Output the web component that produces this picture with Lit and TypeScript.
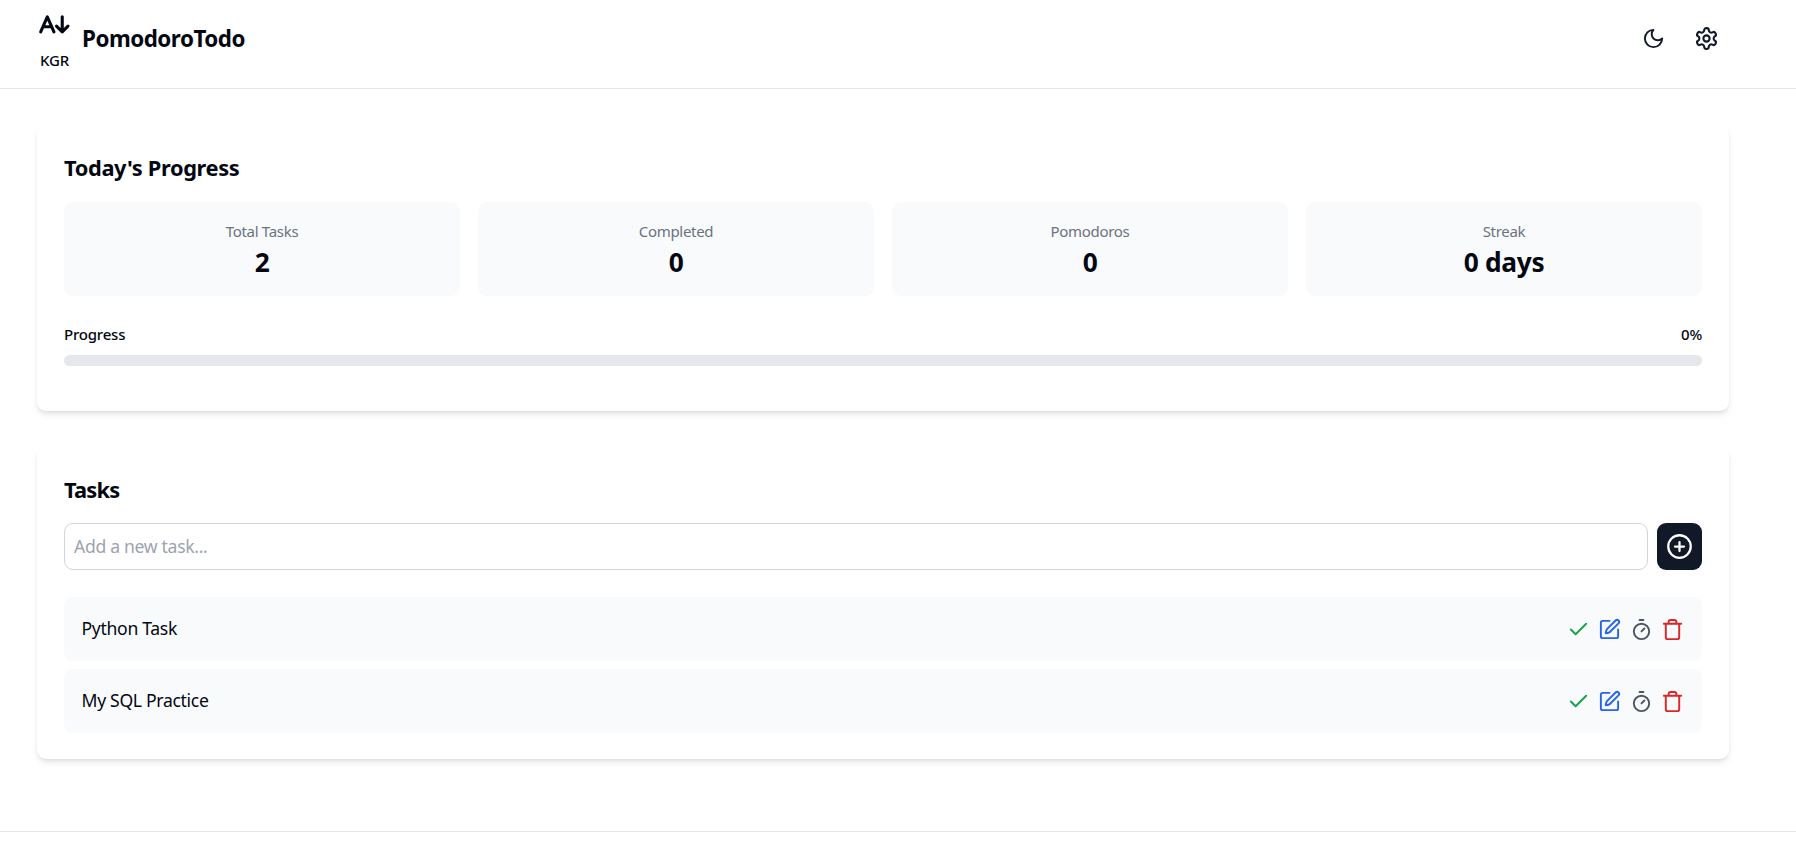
import { LitElement, html, css, svg } from "lit";
import { customElement } from "lit/decorators.js";

const icon = (cls: string, body: unknown, w = 2) => html`<svg class=${cls} viewBox="0 0 24 24" fill="none" stroke="currentColor" stroke-width=${w} stroke-linecap="round" stroke-linejoin="round">${body}</svg>`;

const moon = svg`<path d="M12 3a6 6 0 0 0 9 9 9 9 0 1 1-9-9Z"/>`;
const gear = svg`<path d="M12.22 2h-.44a2 2 0 0 0-2 2v.18a2 2 0 0 1-1 1.73l-.43.25a2 2 0 0 1-2 0l-.15-.08a2 2 0 0 0-2.73.73l-.22.38a2 2 0 0 0 .73 2.73l.15.1a2 2 0 0 1 1 1.72v.51a2 2 0 0 1-1 1.74l-.15.09a2 2 0 0 0-.73 2.73l.22.38a2 2 0 0 0 2.73.73l.15-.08a2 2 0 0 1 2 0l.43.25a2 2 0 0 1 1 1.73V20a2 2 0 0 0 2 2h.44a2 2 0 0 0 2-2v-.18a2 2 0 0 1 1-1.73l.43-.25a2 2 0 0 1 2 0l.15.08a2 2 0 0 0 2.73-.73l.22-.39a2 2 0 0 0-.73-2.73l-.15-.08a2 2 0 0 1-1-1.74v-.5a2 2 0 0 1 1-1.74l.15-.09a2 2 0 0 0 .73-2.73l-.22-.38a2 2 0 0 0-2.73-.73l-.15.08a2 2 0 0 1-2 0l-.43-.25a2 2 0 0 1-1-1.73V4a2 2 0 0 0-2-2z"/><circle cx="12" cy="12" r="3"/>`;
const plus = svg`<circle cx="12" cy="12" r="10"/><path d="M8 12h8M12 8v8"/>`;
const check = svg`<path d="M20 6 9 17l-5-5"/>`;
const edit = svg`<path d="M12 3H5a2 2 0 0 0-2 2v14a2 2 0 0 0 2 2h14a2 2 0 0 0 2-2v-7"/><path d="M18.375 2.625a1 1 0 0 1 3 3l-9.013 9.014a2 2 0 0 1-.853.505l-2.873.84a.5.5 0 0 1-.62-.62l.84-2.873a2 2 0 0 1 .506-.852z"/>`;
const timer = svg`<path d="M10 2h4M12 14l3-3"/><circle cx="12" cy="14" r="8"/>`;
const trash = svg`<path d="M3 6h18M19 6v14a2 2 0 0 1-2 2H7a2 2 0 0 1-2-2V6M8 6V4a2 2 0 0 1 2-2h4a2 2 0 0 1 2 2v2"/>`;
const logoMark = svg`<path d="M1.5 17 7.5 3.5 13.5 17M3.6 12.5h7.8" /><path d="M21 3.5V17M15.8 11.8 21 17l5.2-5.2"/>`;

@customElement("app-root")
export class AppRoot extends LitElement {
  static styles = css`
    :host { display: block; min-height: 846px; background: #fff; color: #030712; font-family: "Noto Sans", "Open Sans", sans-serif; overflow: hidden; }
    * { box-sizing: border-box; }
    header { height: 89px; border-bottom: 1px solid #e5e7eb; display: flex; align-items: center; justify-content: space-between; padding: 0 77px 12px 37px; }
    .brand { display: flex; align-items: center; gap: 10px; }
    .logo { width: 35px; margin-top: 5px; display: flex; flex-direction: column; align-items: center; gap: 17px; }
    .logo svg { width: 35px; height: 21px; display: block; }
    .logo span { font-size: 15px; line-height: 18px; font-weight: 500; letter-spacing: -0.2px; }
    h1 { margin: 0; padding-top: 2px; font-size: 22.4px; line-height: 32px; font-weight: 700; letter-spacing: -0.5px; }
    .top-actions { display: flex; align-items: center; gap: 29px; }
    .top-actions svg { display: block; color: #111827; }
    .moon { width: 23px; height: 23px; }
    .gear { width: 25px; height: 25px; }
    main { padding: 36px 67px 0 37px; display: flex; flex-direction: column; gap: 36px; }
    .card { background: #fff; border-radius: 9px; padding: 27px 27px 26px; box-shadow: 0 4px 7px -1px rgba(0,0,0,.1), 0 2px 4px -2px rgba(0,0,0,.1); }
    .card.first { padding-bottom: 27px; }
    h2 { margin: 0; font-size: 21.8px; line-height: 32px; font-weight: 700; letter-spacing: -0.35px; }
    h2.short { letter-spacing: -0.8px; }
    .stats { margin-top: 18px; display: grid; grid-template-columns: repeat(4, 1fr); gap: 18px; }
    .stat { height: 94px; padding-top: 19px; background: #f9fafb; border-radius: 9px; display: flex; flex-direction: column; align-items: center; }
    .stat .label { font-size: 15px; line-height: 20px; color: #6b7280; letter-spacing: -0.3px; }
    .stat .value { margin-top: 3px; font-size: 26.3px; line-height: 36px; font-weight: 700; letter-spacing: -0.3px; }
    .prog-head { margin-top: 28px; display: flex; justify-content: space-between; font-size: 15px; line-height: 20px; font-weight: 500; letter-spacing: -0.2px; }
    .bar { margin-top: 11px; height: 11px; border-radius: 6px; background: #e5e7eb; margin-bottom: 18px; }
    .add { margin-top: 17px; display: flex; gap: 9px; }
    input { flex: 1; min-width: 0; height: 47px; border: 1px solid #d1d5db; border-radius: 9px; padding: 0 8px 1px 9px; font: inherit; font-size: 17.6px; letter-spacing: -0.32px; background: #fff; outline: none; }
    input::placeholder { color: #9ca3af; opacity: 1; }
    .add button { width: 45px; height: 47px; border: 0; border-radius: 9px; background: #111827; color: #fff; display: flex; align-items: center; justify-content: center; padding: 0; }
    .add button svg { width: 27px; height: 27px; }
    .tasks { margin-top: 27px; display: flex; flex-direction: column; gap: 8px; }
    .task { height: 64px; background: #f9fafb; border-radius: 9px; padding: 0 18px; display: flex; align-items: center; justify-content: space-between; font-size: 17.6px; letter-spacing: -0.32px; }
    .task > span { margin: -2px 0 0 -0.5px; }
    .acts { display: flex; align-items: center; gap: 8.5px; }
    .acts svg { width: 23px; height: 23px; display: block; }
    .green { color: #16a34a; } .blue { color: #2563eb; } .gray { color: #4b5563; } .red { color: #dc2626; }
    footer { margin-top: 72px; border-top: 1px solid #e5e7eb; height: 16px; }
  `;

  render() {
    const stats = [["Total Tasks", "2"], ["Completed", "0"], ["Pomodoros", "0"], ["Streak", "0 days"]];
    const tasks = ["Python Task", "My SQL Practice"];
    return html`
      <header>
        <div class="brand">
          <div class="logo">
            <svg viewBox="0 0 28 19" fill="none" stroke="currentColor" stroke-width="2.8" stroke-linecap="round" stroke-linejoin="round">${logoMark}</svg>
            <span>KGR</span>
          </div>
          <h1>PomodoroTodo</h1>
        </div>
        <div class="top-actions">${icon("moon", moon)}${icon("gear", gear)}</div>
      </header>
      <main>
        <section class="card first">
          <h2>Today's Progress</h2>
          <div class="stats">
            ${stats.map(([l, v]) => html`<div class="stat"><div class="label">${l}</div><div class="value">${v}</div></div>`)}
          </div>
          <div class="prog-head"><span>Progress</span><span>0%</span></div>
          <div class="bar"></div>
        </section>
        <section class="card">
          <h2 class="short">Tasks</h2>
          <div class="add">
            <input placeholder="Add a new task..." />
            <button>${icon("", plus)}</button>
          </div>
          <div class="tasks">
            ${tasks.map((t) => html`<div class="task"><span>${t}</span><div class="acts">
              ${icon("green", check)}${icon("blue", edit)}${icon("gray", timer)}${icon("red", trash)}
            </div></div>`)}
          </div>
        </section>
      </main>
      <footer></footer>
    `;
  }
}
